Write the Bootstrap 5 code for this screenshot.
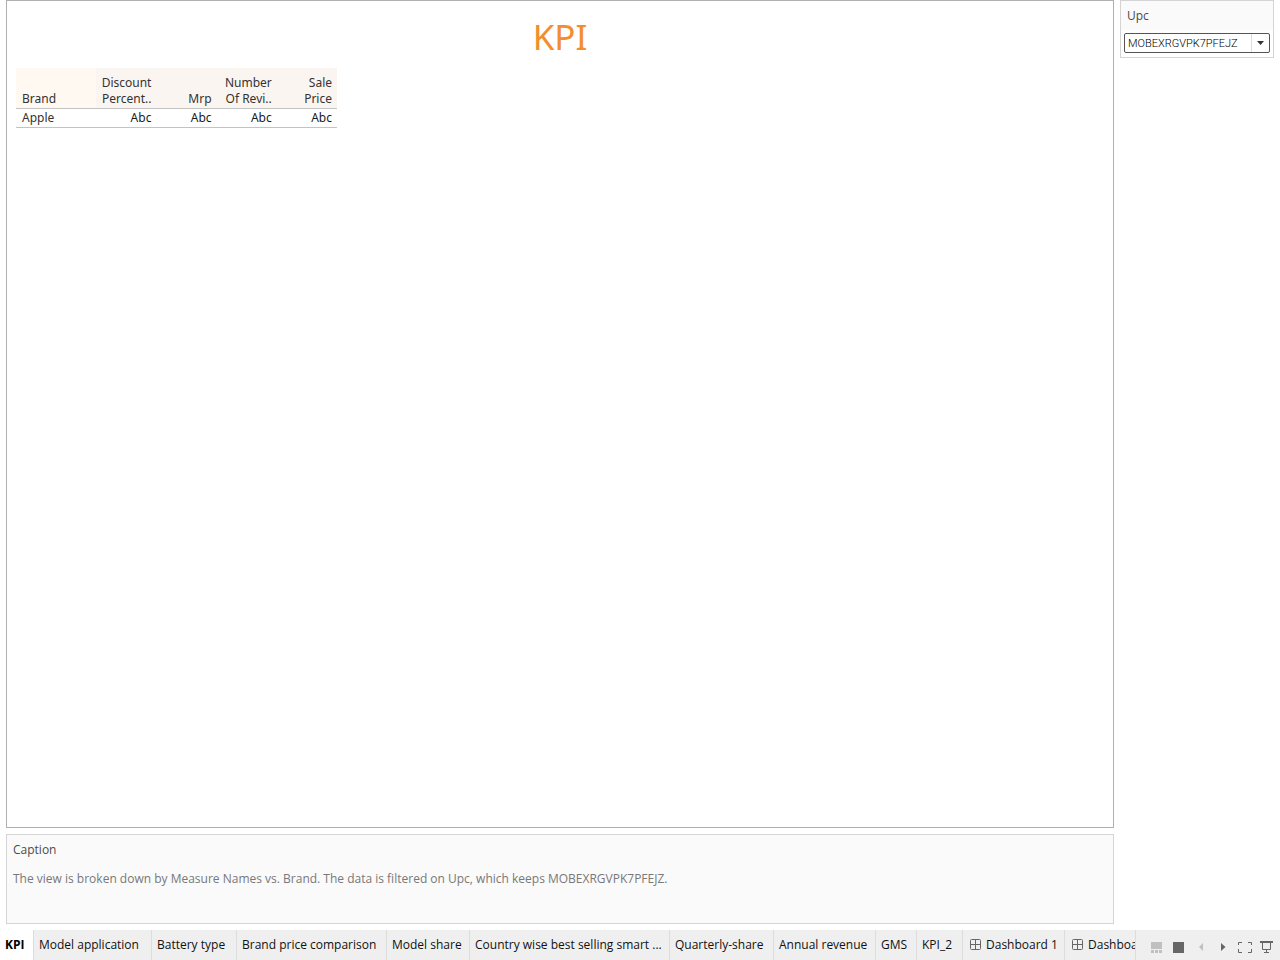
<!DOCTYPE html>
<html lang="en">
<head>
<meta charset="utf-8">
<meta name="viewport" content="width=device-width, initial-scale=1">
<title>KPI</title>
<link href="https://cdn.jsdelivr.net/npm/bootstrap@5.3.0/dist/css/bootstrap.min.css" rel="stylesheet">
<style>
  body { font-family: "Open Sans", "Noto Sans", sans-serif; font-size: 12px; line-height: 16px; color: #333; background: #fff; }
  .workspace { padding: 0 6px 6px; gap: 6px; }
  .main-col { gap: 6px; }
  .side-col { width: 154px; }
  .view-pane { border: 1px solid #b0b0b0; }
  .view-title { font-family: "Noto Sans", sans-serif; font-size: 35px; line-height: 48px; color: #f28e2b; margin: 12px 0 7px; font-weight: 400; }
  .kpi-grid { width: 321px; margin-left: 9px; table-layout: fixed; border-collapse: separate; border-spacing: 0; font-family: "Noto Sans", sans-serif; }
  .kpi-grid th, .kpi-grid td { font-weight: 400; padding: 0 5px 1px; border-bottom: 1px solid #c3c3c3; text-align: right; white-space: nowrap; }
  .kpi-grid thead th { height: 41px; vertical-align: bottom; background: #faf5f1; }
  .kpi-grid thead th:first-child { background: #fff9f2; }
  .kpi-grid tr > :first-child { text-align: left; padding-left: 6px; }
  .kpi-grid td { color: #1a1a1a; height: 19px; }
  .kpi-grid tbody th { height: 19px; }
  .brand-col { width: 80px; }
  .value-col { width: 60px; }
  .caption-pane { border: 1px solid #d4d4d4; background: #fafafa; height: 90px; padding: 7px 6px; }
  .caption-pane h2 { font-size: 12px; line-height: 16px; font-weight: 400; margin: 0 0 13px; color: #4b4b4b; }
  .caption-pane p { margin: 0; color: #787878; }
  .filter-box { border: 1px solid #d4d4d4; }
  .filter-box label { background: #fafafa; height: 29px; padding: 7px 6px; color: #4b4b4b; }
  .filter-field { padding: 3px 3px 4px; }
  .filter-field select { appearance: none; width: 100%; height: 20px; border: 1px solid #555; border-radius: 2px; background: #fff; font-family: Roboto, sans-serif; font-size: 11px; font-weight: 300; line-height: 16px; padding: 1px 18px 0 3px; color: #000; }
  .filter-arrow { top: 4px; right: 4px; width: 18px; height: 18px; border-left: 1px solid #ddd; pointer-events: none; }
  .sheet-bar { height: 30px; background: #efefef; }
  .sheet-tab { flex: none; border: 0; border-right: 1px solid #dcdcdc; background: none; text-align: left; padding: 0 0 0 5px; font-size: 12px; color: #111; white-space: nowrap; overflow: hidden; }
  .sheet-tab.active { background: #fff; font-weight: 700; color: #000; }
  .sheet-tab svg { margin: 0 5px 0 2px; vertical-align: -1px; }
  .sheet-tab:nth-child(1) { width: 34px; }
  .sheet-tab:nth-child(2) { width: 118px; }
  .sheet-tab:nth-child(3) { width: 85px; }
  .sheet-tab:nth-child(4) { width: 150px; }
  .sheet-tab:nth-child(5) { width: 83px; }
  .sheet-tab:nth-child(6) { width: 200px; }
  .sheet-tab:nth-child(7) { width: 104px; }
  .sheet-tab:nth-child(8) { width: 102px; }
  .sheet-tab:nth-child(9) { width: 41px; }
  .sheet-tab:nth-child(10) { width: 46px; }
  .sheet-tab:nth-child(11), .sheet-tab:nth-child(12) { width: 102px; }
  .sheet-tools { width: 145px; border-left: 1px solid #dcdcdc; padding: 4px 2px 0 10px; }
  .sheet-tools button { border: 0; background: none; padding: 0; width: 22px; color: #666; line-height: 0; }
  .sheet-tools button:disabled { color: #c0c0c0; }
</style>
</head>
<body>
<div class="d-flex flex-column vh-100">
  <main class="workspace d-flex flex-fill">
    <div class="main-col d-flex flex-column flex-fill">
      <section class="view-pane flex-fill">
        <h1 class="view-title text-center">KPI</h1>
        <table class="kpi-grid">
          <colgroup><col class="brand-col"><col class="value-col"><col class="value-col"><col class="value-col"><col class="value-col"></colgroup>
          <thead>
            <tr><th scope="col">Brand</th><th scope="col">Discount<br>Percent..</th><th scope="col">Mrp</th><th scope="col">Number<br>Of Revi..</th><th scope="col">Sale<br>Price</th></tr>
          </thead>
          <tbody>
            <tr><th scope="row">Apple</th><td>Abc</td><td>Abc</td><td>Abc</td><td>Abc</td></tr>
          </tbody>
        </table>
      </section>
      <section class="caption-pane">
        <h2>Caption</h2>
        <p>The view is broken down by Measure Names vs. Brand. The data is filtered on Upc, which keeps MOBEXRGVPK7PFEJZ.</p>
      </section>
    </div>
    <aside class="side-col flex-shrink-0">
      <div class="filter-box">
        <label class="d-block" for="upc">Upc</label>
        <div class="filter-field position-relative">
          <select id="upc" class="d-block"><option>MOBEXRGVPK7PFEJZ</option></select>
          <span class="filter-arrow position-absolute d-flex align-items-center justify-content-center"><svg width="7" height="4" aria-hidden="true"><path d="M0 0h7L3.500 4z" fill="#333"/></svg></span>
        </div>
      </div>
    </aside>
  </main>
  <footer class="sheet-bar d-flex flex-shrink-0">
    <nav class="d-flex flex-fill overflow-hidden" aria-label="Sheets">
      <button type="button" class="sheet-tab active">KPI</button>
      <button type="button" class="sheet-tab">Model application</button>
      <button type="button" class="sheet-tab">Battery type</button>
      <button type="button" class="sheet-tab">Brand price comparison</button>
      <button type="button" class="sheet-tab">Model share</button>
      <button type="button" class="sheet-tab">Country wise best selling smart ...</button>
      <button type="button" class="sheet-tab">Quarterly-share</button>
      <button type="button" class="sheet-tab">Annual revenue</button>
      <button type="button" class="sheet-tab">GMS</button>
      <button type="button" class="sheet-tab">KPI_2</button>
      <button type="button" class="sheet-tab"><svg width="11" height="11" fill="none" stroke="#666" aria-hidden="true"><rect x=".5" y=".5" width="10" height="10" rx="1"/><path d="M5.500.5v10M.5 5.500h10"/></svg>Dashboard 1</button>
      <button type="button" class="sheet-tab"><svg width="11" height="11" fill="none" stroke="#666" aria-hidden="true"><rect x=".5" y=".5" width="10" height="10" rx="1"/><path d="M5.500.5v10M.5 5.500h10"/></svg>Dashboard 2</button>
    </nav>
    <div class="sheet-tools d-flex flex-shrink-0 align-items-center">
      <button type="button" disabled aria-label="Show filmstrip"><svg width="12" height="12" fill="currentColor"><path d="M0 1h11v7H0zM0 9h3v3H0zM4 9h3v3H4zM8 9h3v3H8z"/></svg></button>
      <button type="button" aria-label="Show tabs"><svg width="12" height="12" fill="currentColor"><path d="M0 1h11v11H0z"/></svg></button>
      <button type="button" disabled aria-label="Previous sheet"><svg width="6" height="8" fill="currentColor"><path d="M5 0v8L1 4z"/></svg></button>
      <button type="button" aria-label="Next sheet"><svg width="6" height="8" fill="currentColor"><path d="M1 0v8L5.500 4z"/></svg></button>
      <button type="button" aria-label="Full screen"><svg width="14" height="12" fill="none" stroke="currentColor"><path d="M.5 4V1.500H4M10 1.500h3.500V4M13.500 8v3.500H10M4 11.500H.5V8"/></svg></button>
      <button type="button" aria-label="Presentation mode"><svg width="14" height="12" fill="none" stroke="currentColor"><path d="M0 1h13" stroke-width="2"/><path d="M2.500 2v6.500h8V2M6.500 8.500v3M4 11.500h5"/></svg></button>
    </div>
  </footer>
</div>
<script src="https://cdn.jsdelivr.net/npm/bootstrap@5.3.0/dist/js/bootstrap.bundle.min.js"></script>
</body>
</html>
